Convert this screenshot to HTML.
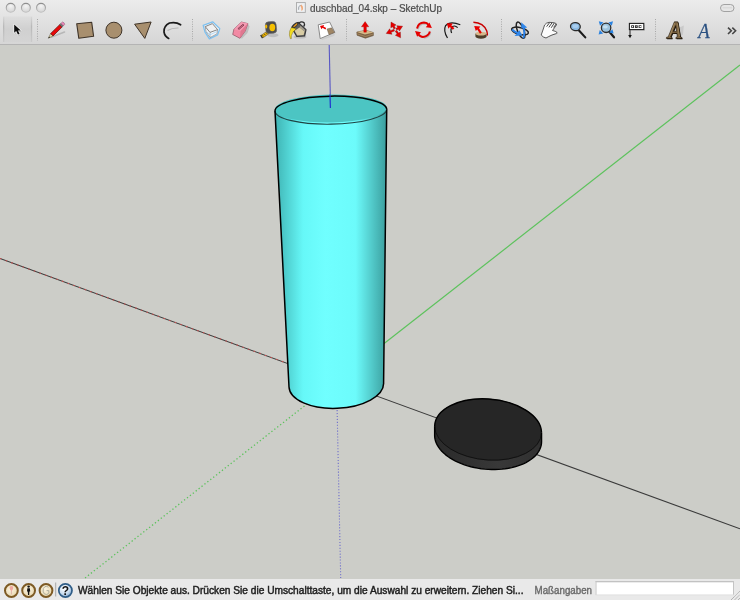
<!DOCTYPE html>
<html><head><meta charset="utf-8">
<style>
html,body{margin:0;padding:0;width:740px;height:600px;overflow:hidden;background:#cccdc8;}
svg{display:block;position:absolute;left:0;top:0;will-change:transform;}
text{font-family:"Liberation Sans",sans-serif;}
</style></head>
<body>
<svg width="740" height="600" viewBox="0 0 740 600">
<defs>
  <linearGradient id="tb" x1="0" y1="0" x2="0" y2="1">
    <stop offset="0" stop-color="#ececec"/>
    <stop offset="1" stop-color="#d6d6d6"/>
  </linearGradient>
  <linearGradient id="side" x1="275" y1="0" x2="387" y2="0" gradientUnits="userSpaceOnUse">
    <stop offset="0" stop-color="#3fb3b3"/>
    <stop offset="0.25" stop-color="#66f8f8"/>
    <stop offset="0.45" stop-color="#70ffff"/>
    <stop offset="0.72" stop-color="#6cfbfb"/>
    <stop offset="1" stop-color="#3a9c9c"/>
  </linearGradient>
</defs>
<!-- canvas -->
<rect x="0" y="45" width="740" height="534" fill="#cccdc8"/>
<!-- axes -->
<line x1="0" y1="258.5" x2="740" y2="528.8" stroke="#3a3a3a" stroke-width="1.1"/>
<line x1="0" y1="258.5" x2="336.5" y2="381.3" stroke="#c85050" stroke-width="1.1" stroke-dasharray="1.5 4.5"/>
<line x1="336.5" y1="380.8" x2="740" y2="65" stroke="#5cc25c" stroke-width="1.2"/>
<line x1="336.5" y1="380.8" x2="85" y2="578" stroke="#5cc25c" stroke-width="1.3" stroke-dasharray="1.3 2.4"/>
<line x1="329.2" y1="45" x2="336.6" y2="380.8" stroke="#5858c4" stroke-width="1.1"/>
<line x1="336.5" y1="380.8" x2="340.7" y2="578" stroke="#6464cc" stroke-width="1.1" stroke-dasharray="1.1 1.83" opacity="0.9"/>

<!-- cylinder -->
<path d="M275,111 L289,387 A47.3,23.3 -2.4 0 0 383.6,383 L386.7,109.3 Z" fill="url(#side)"/>
<ellipse cx="330.85" cy="108.5" rx="55.85" ry="14" fill="#4cc5c3" transform="rotate(-0.9 330.85 108.5)"/>
<path d="M275,111 A55.85,14 -0.9 0 1 386.7,109.3" fill="none" stroke="#000" stroke-width="1.5"/>
<path d="M275,111 A55.85,14 -0.9 0 0 386.7,109.3" fill="none" stroke="#1e4444" stroke-width="1.1"/>
<path d="M275,111 L289,387 A47.3,23.3 -2.4 0 0 383.6,383 L386.7,109.3" fill="none" stroke="#000" stroke-width="1.5" stroke-linejoin="round"/>
<line x1="330" y1="94.5" x2="330.4" y2="108" stroke="#2030d0" stroke-width="1.2"/>
<!-- disc -->
<defs><linearGradient id="dside" x1="434" y1="0" x2="542" y2="0" gradientUnits="userSpaceOnUse">
<stop offset="0" stop-color="#2a2a2a"/><stop offset="0.6" stop-color="#383838"/><stop offset="1" stop-color="#303030"/></linearGradient></defs>
<path d="M541.56,432.63 L541.56,441.63 L541.45,443.64 L541.11,445.63 L540.54,447.59 L539.74,449.51 L538.73,451.38 L537.49,453.20 L536.05,454.96 L534.40,456.65 L532.55,458.25 L530.52,459.78 L528.30,461.21 L525.90,462.54 L523.35,463.78 L520.65,464.90 L517.80,465.91 L514.83,466.80 L511.75,467.58 L508.56,468.22 L505.29,468.74 L501.94,469.14 L498.53,469.40 L495.08,469.52 L491.60,469.52 L488.10,469.38 L484.60,469.11 L481.12,468.71 L477.67,468.18 L474.26,467.52 L470.91,466.74 L467.64,465.83 L464.45,464.81 L461.37,463.68 L458.40,462.44 L455.55,461.10 L452.85,459.66 L450.30,458.12 L447.90,456.51 L445.68,454.82 L443.65,453.06 L441.80,451.23 L440.15,449.35 L438.71,447.43 L437.47,445.47 L436.46,443.47 L435.66,441.46 L435.09,439.43 L434.75,437.40 L434.64,435.37 L434.64,426.37 Z" fill="url(#dside)"/>
<ellipse cx="488.1" cy="429.5" rx="53.6" ry="30.8" fill="#262626" transform="rotate(5 488.1 429.5)"/>
<path d="M434.64,426.37 A53.6,30.8 5 0 1 541.56,432.63" fill="none" stroke="#000" stroke-width="1.4"/>
<path d="M434.64,426.37 A53.6,30.8 5 0 0 541.56,432.63" fill="none" stroke="#111" stroke-width="1"/>
<path d="M541.56,432.63 L541.56,441.63 L541.45,443.64 L541.11,445.63 L540.54,447.59 L539.74,449.51 L538.73,451.38 L537.49,453.20 L536.05,454.96 L534.40,456.65 L532.55,458.25 L530.52,459.78 L528.30,461.21 L525.90,462.54 L523.35,463.78 L520.65,464.90 L517.80,465.91 L514.83,466.80 L511.75,467.58 L508.56,468.22 L505.29,468.74 L501.94,469.14 L498.53,469.40 L495.08,469.52 L491.60,469.52 L488.10,469.38 L484.60,469.11 L481.12,468.71 L477.67,468.18 L474.26,467.52 L470.91,466.74 L467.64,465.83 L464.45,464.81 L461.37,463.68 L458.40,462.44 L455.55,461.10 L452.85,459.66 L450.30,458.12 L447.90,456.51 L445.68,454.82 L443.65,453.06 L441.80,451.23 L440.15,449.35 L438.71,447.43 L437.47,445.47 L436.46,443.47 L435.66,441.46 L435.09,439.43 L434.75,437.40 L434.64,435.37 L434.64,426.37" fill="none" stroke="#000" stroke-width="1.4" stroke-linejoin="round"/>
<!-- top bar -->
<rect x="0" y="0" width="740" height="44" fill="url(#tb)"/>
<rect x="0" y="44" width="740" height="1" fill="#b4b4b4"/>
<rect x="296.5" y="2.6" width="8.8" height="9.8" fill="#eef0f2" stroke="#a8a8a8" stroke-width="0.9"/>
<path d="M301.3,4.5 Q303.5,6 303,9 Q302.6,11 301.3,10.8 Q302,8 300.2,5.6 Z" fill="#f0a878"/>
<path d="M300.5,5 Q298,6.5 298.6,9.8" fill="none" stroke="#8a9098" stroke-width="0.8"/>
<text x="310" y="12" font-size="10.8" fill="#4a4a4a" stroke="#4a4a4a" stroke-width="0.2" textLength="132" lengthAdjust="spacingAndGlyphs">duschbad_04.skp – SketchUp</text>


<!-- traffic lights -->
<defs>
  <radialGradient id="tl" cx="0.5" cy="0.3" r="0.7">
    <stop offset="0" stop-color="#f4f4f4"/><stop offset="1" stop-color="#d4d4d4"/>
  </radialGradient>
  <linearGradient id="selbtn" x1="0" y1="0" x2="0" y2="1">
    <stop offset="0" stop-color="#d8d8d8"/><stop offset="1" stop-color="#cbcbcb"/>
  </linearGradient>
</defs>
<defs><linearGradient id="tls" x1="0" y1="0" x2="0" y2="1"><stop offset="0" stop-color="#8e8e8e"/><stop offset="1" stop-color="#c0c0c0"/></linearGradient></defs>
<circle cx="10.7" cy="7.8" r="4.45" fill="url(#tl)" stroke="url(#tls)" stroke-width="1.1"/>
<circle cx="25.9" cy="7.8" r="4.45" fill="url(#tl)" stroke="url(#tls)" stroke-width="1.1"/>
<circle cx="41" cy="7.8" r="4.45" fill="url(#tl)" stroke="url(#tls)" stroke-width="1.1"/>
<rect x="720.5" y="4.5" width="13.5" height="7" rx="3.5" fill="#e6e6e6" stroke="#9a9a9a" stroke-width="0.9"/>
<line x1="722.5" y1="7.8" x2="732" y2="7.8" stroke="#d0d0d0" stroke-width="0.8"/>
<!-- selected tool button -->
<defs>
<linearGradient id="selbg" x1="0" y1="0" x2="0" y2="1"><stop offset="0" stop-color="#dedede"/><stop offset="0.5" stop-color="#d0d0d0"/><stop offset="1" stop-color="#d4d4d4"/></linearGradient>
<linearGradient id="selside" x1="0" y1="0" x2="0" y2="1"><stop offset="0" stop-color="#bdbdbd" stop-opacity="0.2"/><stop offset="0.4" stop-color="#b8b8b8"/><stop offset="1" stop-color="#c0c0c0" stop-opacity="0.5"/></linearGradient>
</defs>
<rect x="3.3" y="16.5" width="28.6" height="25.5" fill="url(#selbg)"/>
<rect x="3" y="16.5" width="1.3" height="25.5" fill="url(#selside)"/>
<rect x="30.9" y="16.5" width="1.3" height="25.5" fill="url(#selside)"/>
<!-- arrow cursor -->
<path d="M15,26 L15,34 L17,32.2 L18.7,35.8 L20.3,35.1 L18.7,31.7 L21.4,31.7 Z" fill="#8a8a8a" opacity="0.4"/>
<path d="M14.2,24.4 L14.2,32.8 L16.2,31 L17.9,34.6 L19.6,33.9 L18,30.4 L20.8,30.4 Z" fill="#f6f6f6" stroke="#f6f6f6" stroke-width="1.3" stroke-linejoin="round"/>
<path d="M14.2,24.4 L14.2,32.8 L16.2,31 L17.9,34.6 L19.6,33.9 L18,30.4 L20.8,30.4 Z" fill="#0e0e0e"/>
<!-- separators -->
<g stroke="#a8a8a8" stroke-width="1" stroke-dasharray="1 1.4">
<line x1="37.5" y1="19" x2="37.5" y2="41"/>
<line x1="192.5" y1="19" x2="192.5" y2="41"/>
<line x1="346.5" y1="19" x2="346.5" y2="41"/>
<line x1="501.5" y1="19" x2="501.5" y2="41"/>
<line x1="655.5" y1="19" x2="655.5" y2="41"/>
</g>
<!-- pencil -->
<path d="M51,37.2 L64.5,32" stroke="#9a9a9a" stroke-width="1.6" opacity="0.55" stroke-linecap="round"/>
<path d="M48.30,38.20 L53.06,35.91 L50.68,33.48 Z" fill="#e8dca0" stroke="#3a3020" stroke-width="0.4"/>
<path d="M48.30,38.20 L50.01,37.38 L49.16,36.50 Z" fill="#111"/>
<path d="M53.06,35.91 L62.05,27.09 L59.67,24.66 L50.68,33.48 Z" fill="#e80808" stroke="#4a0000" stroke-width="0.6"/>
<path d="M62.05,27.09 L63.34,25.83 L60.96,23.40 L59.67,24.66 Z" fill="#7a7a7a" stroke="#333" stroke-width="0.4"/>
<path d="M63.34,25.83 L64.82,24.37 Q64.41,22.39 62.44,21.95 L60.96,23.40 Z" fill="#e888b8" stroke="#7a3a5a" stroke-width="0.4"/>
<!-- rectangle -->
<path d="M76.7,23.7 L91.7,22.2 L93.6,36.2 L78.8,38.3 Z" fill="#a88f6e" stroke="#3e3328" stroke-width="1.1" stroke-linejoin="round"/>
<!-- circle -->
<circle cx="113.9" cy="30.2" r="8" fill="#a88f6e" stroke="#3e3328" stroke-width="1"/>
<!-- triangle -->
<path d="M134.6,24.2 L151.1,22 L144.8,38.4 Z" fill="#a88f6e" stroke="#3e3328" stroke-width="1" stroke-linejoin="round"/>
<!-- arc -->
<path d="M167.5,30.5 Q172,27.8 178.5,28" stroke="#b4b4b4" stroke-width="1.2" fill="none"/>
<path d="M180.6,24.8 Q176,21.5 169.5,23 Q163.5,26 164,32 Q164.8,36.5 168.7,38.4" stroke="#1a1a1a" stroke-width="1.7" fill="none" stroke-linecap="round"/>
<!-- select box (outliner) -->
<path d="M203.2,25.4 L212.6,21.8 L219.8,28.6 L217.6,34.8 L209.4,38.8 L205,32.2 Z" fill="#f4f6f8" stroke="#7cc0f0" stroke-width="1.3" stroke-linejoin="round"/>
<path d="M205.2,26.6 L212.4,23.6 L217.6,29.6 L210,32.4 Z" fill="#f0f0f0" stroke="#6a6a6a" stroke-width="0.8" stroke-linejoin="round"/>
<path d="M205.2,26.6 L206,31.6 L210,37.6 L217,33.8 L217.6,29.6" fill="none" stroke="#8a8a8a" stroke-width="0.7"/>
<path d="M210,32.4 L210,37.6" stroke="#7a9ab0" stroke-width="0.6"/>
<path d="M206.5,31.6 L210,34.8 L216.8,31.6" fill="none" stroke="#88c4ee" stroke-width="0.6"/>
<!-- eraser -->
<path d="M240,38.3 L245.2,31.1 L247.9,23.6 L249.6,26.5 L247.5,33 L242,38.6 Z" fill="#a8a8a8" opacity="0.55"/>
<path d="M233.9,29.2 L241.4,22 L247.9,23.6 L245.2,31.1 L239.9,38.3 L232.7,34.5 Z" fill="#f28aa4" stroke="#7a4050" stroke-width="0.6" stroke-linejoin="round"/>
<path d="M233.9,29.2 L241.4,22 L247.9,23.6 L240.6,30.9 Z" fill="#f49ab2"/>
<path d="M240.6,30.9 L247.9,23.6 L245.2,31.1 L239.9,38.3 Z" fill="#e07890"/>
<path d="M237.9,28.6 L242.9,24.3 L244,25.1 L239.1,29.4 Z" fill="#d8708a" stroke="#6a3040" stroke-width="0.7"/>
<!-- tape measure -->
<ellipse cx="273" cy="35.2" rx="5.5" ry="2" fill="#b0b0b0" opacity="0.7"/>
<path d="M260.8,35.6 L267,31.2 L269,33.6 L262.8,38 Z" fill="#f2b800" stroke="#3a3a3a" stroke-width="0.5"/>
<path d="M262.6,35.2 l0.9,1.2 M264.4,34 l0.9,1.2 M266.2,32.7 l0.9,1.2" stroke="#1a1a1a" stroke-width="0.7"/>
<path d="M260.2,35.4 L261.2,34.8 L263,37.6 L262,38.5 Z" fill="#333"/>
<rect x="265.6" y="21.6" width="10.8" height="11.8" rx="3.4" fill="#4c4c4c" stroke="#6a6a6a" stroke-width="0.6" transform="rotate(-6 271 27.5)"/>
<ellipse cx="272.3" cy="27.5" rx="2.9" ry="3.7" fill="#f6c000"/>
<ellipse cx="266.2" cy="26.4" rx="1.1" ry="2" fill="#f2b800"/>
<!-- paint bucket -->
<ellipse cx="300" cy="37" rx="6.5" ry="1.6" fill="#a8a8a8" opacity="0.6"/>
<path d="M292,28.3 L298.2,22.4 L306,29.6 L304.6,36 L296.8,36.4 Z" fill="#5e5e5e" stroke="#3a3a3a" stroke-width="1.2" stroke-linejoin="round"/>
<path d="M294.6,30.8 L299.6,27.4 L304.6,31.4 L303.6,35.1 L297.2,35.5 Z" fill="#d8cca4"/>
<path d="M299.6,27.4 L304.6,31.4 L305.2,29.9 L300.5,25.8 Z" fill="#a8a090"/>
<ellipse cx="294.9" cy="25.4" rx="4.6" ry="1.8" transform="rotate(-42 294.9 25.4)" fill="#2e2e2e"/>
<ellipse cx="295.3" cy="25.3" rx="2.8" ry="0.8" transform="rotate(-42 295.3 25.3)" fill="#d89020"/>
<path d="M298.8,23.2 Q301.5,20.8 304.1,22.8 Q305.2,24.4 303.6,26.6" fill="none" stroke="#2a2a2a" stroke-width="1.3"/>
<path d="M291.3,27.6 Q289,31 289.4,35 L290.3,38.6 L291.4,38.6 L291.3,35.8 Q292.4,31.6 296.2,28.8 Z" fill="#f2dc22" stroke="#6a5a10" stroke-width="0.4"/>
<!-- component -->
<path d="M321,39 L335.5,33 L334,36 L322,40 Z" fill="#c0c0c0" opacity="0.5"/>
<path d="M318.2,24.8 L329.6,22 L334.8,32.4 L320.2,38.6 Z" fill="#ffffff" stroke="#8a8a8a" stroke-width="1" stroke-linejoin="round"/>
<path d="M327,29 L331.6,27.8 L334.5,32.4 L329,34.6 Z" fill="#a08664" stroke="#5a4a38" stroke-width="0.4"/>
<path d="M320,26 L324.2,25.1 L323.4,26.4 L326.2,28 L325.4,29.4 L322.6,27.8 L321.5,29.2 Z" fill="#e80000"/>
<!-- push pull -->
<path d="M356.8,32 L366,30.3 L373.4,32.6 L373.4,35.6 L365.4,38.2 L357,35.2 Z" fill="#7e6446" stroke="#5a4630" stroke-width="0.5" stroke-linejoin="round"/>
<path d="M357,33.8 L365.4,36.5 L373.4,34" fill="none" stroke="#b89c70" stroke-width="0.6"/>
<path d="M356.8,32 L366,30.3 L373.4,32.6 L365,34.6 Z" fill="#d6ba8a"/>
<path d="M365.1,21.6 L368.8,26.8 L366.4,26.8 L366.4,32.2 L363.8,32.2 L363.8,26.8 L361.4,26.8 Z" fill="#e80000" stroke="#a00000" stroke-width="0.3"/>
<!-- move -->
<g fill="#e80000" stroke="#7a0000" stroke-width="0.35" stroke-linejoin="round">
<path d="M391.00,22.00 L396.06,24.90 L394.22,25.93 L395.50,28.21 L393.93,29.09 L392.65,26.80 L390.82,27.83 Z"/>
<path d="M402.60,26.20 L399.39,31.07 L398.48,29.17 L396.77,29.99 L395.99,28.37 L397.70,27.55 L396.79,25.66 Z"/>
<path d="M386.20,33.40 L389.70,28.74 L390.49,30.68 L393.85,29.32 L394.53,30.99 L391.17,32.35 L391.96,34.30 Z"/>
<path d="M400.60,37.80 L395.35,35.26 L397.11,34.11 L395.20,31.20 L396.71,30.21 L398.62,33.12 L400.37,31.97 Z"/>
</g>
<!-- rotate -->
<g fill="none" stroke="#a0a0a0" stroke-width="1.6" opacity="0.55">
<path d="M418,29.3 Q419.5,24 424.8,23.8 Q428,24 429.6,26"/>
<path d="M430.6,32.6 Q429.4,37.6 423.8,37.9"/>
</g>
<g fill="none" stroke="#e00000" stroke-width="2">
<path d="M417,28.4 Q418.4,22.8 424,22.6 Q427.2,22.7 428.6,25"/>
<path d="M429.9,31.6 Q428.6,36.6 423,36.9 Q419.9,36.9 418.6,34.6"/>
</g>
<g fill="#e60000">
<path d="M429.4,22.4 L431.9,28.1 L425.8,27.3 Z"/>
<path d="M415,31.1 L421,32.2 L417.2,36.7 Z"/>
</g>
<!-- follow me -->
<g fill="none" stroke="#1a1a1a" stroke-width="1.2">
<path d="M447.5,38 Q443,31 445.6,25.6 Q450,20.5 460.3,24.7"/>
<path d="M451.6,33 Q450,29 452.4,26.6 Q455,25 457.7,27.7"/>
</g>
<path d="M446.8,23.3 L452.8,23.6 L451.4,25.5 L454.4,28.3 L452.8,29.7 L449.8,27 L448.4,28.8 Z" fill="#e80000"/>
<!-- scale / offset -->
<path d="M473.4,22.2 Q483.5,22.5 486.8,31 Q487.6,34 487.2,35.5" fill="none" stroke="#c80000" stroke-width="1.4"/>
<path d="M475.4,33.6 L475.4,36.6 A5.6,2.1 0 0 0 486.6,36.6 L486.6,33.6 Z" fill="#4e3e2a"/>
<ellipse cx="481" cy="33.6" rx="5.6" ry="1.9" fill="#d6b68a"/>
<path d="M474.2,26 L480.4,26.4 L479,28.2 L481.8,32.6 L480,33.8 L477.2,29.4 L475.8,31 Z" fill="#e80000"/>
<!-- orbit -->
<ellipse cx="520" cy="31" rx="8.6" ry="3.4" transform="rotate(14 520 31)" fill="none" stroke="#222" stroke-width="1.5"/>
<ellipse cx="520.6" cy="30.2" rx="3.2" ry="8.6" transform="rotate(-22 520.6 30.2)" fill="none" stroke="#222" stroke-width="1.5"/>
<path d="M512,29.5 Q514.5,32 518.5,33.2" fill="none" stroke="#2a80e8" stroke-width="1.8"/>
<path d="M514.6,36 L519.4,30.2 L522.4,35.4 Z" fill="#2f86ea"/>
<path d="M523.4,38.2 Q525.6,31 522.6,25.5" fill="none" stroke="#2a80e8" stroke-width="1.9"/>
<path d="M521.2,22.2 L527.2,27.4 L521.4,28.6 Z" fill="#2f86ea"/>
<!-- pan hand -->
<path d="M544,37.5 Q548.5,37 551,35 Q556,34 557.6,33.2" fill="none" stroke="#bdbdbd" stroke-width="1.2"/>
<path d="M541.2,35 Q543,30 544.6,25 Q546,22.8 549,22.3 L554.5,22.8 Q557,23.5 556.4,25 L552.5,30.5 Q555.5,31 557.2,32.6 Q556,34 552,35 Q548.5,36.5 546,38 Q543,37.4 541.2,35 Z" fill="#fcfcfc" stroke="#4a4a4a" stroke-width="0.9" stroke-linejoin="round"/>
<path d="M546.6,26.6 L549.6,22.7 M548.9,27.3 L552,22.8 M551.2,27.8 L554.3,23 M553.6,27.4 L556.2,24" stroke="#333" stroke-width="0.9"/>
<!-- zoom -->
<line x1="579" y1="30.5" x2="585.3" y2="37.4" stroke="#1a1a1a" stroke-width="2.1" stroke-linecap="round"/>
<ellipse cx="575.4" cy="26.6" rx="4.9" ry="4" fill="#8cbae2" stroke="#2a2a2a" stroke-width="1.3" transform="rotate(8 575.4 26.6)"/>
<ellipse cx="575.4" cy="26.2" rx="2.8" ry="1.9" fill="#a8cef0"/>
<!-- zoom extents -->
<line x1="608.6" y1="30.8" x2="614" y2="37.3" stroke="#1a1a1a" stroke-width="2.2" stroke-linecap="round"/>
<circle cx="606.1" cy="27.8" r="4.7" fill="#9cc2dc" stroke="#2e2e2e" stroke-width="1.3"/>
<ellipse cx="605.3" cy="26.8" rx="2.5" ry="1.6" fill="#c6e0f0"/>
<g fill="#2a82e0">
<path d="M598.8,21.3 L603.5,22.4 L600,25.8 Z"/>
<path d="M613,21.3 L611.8,25.8 L608.4,22.4 Z"/>
<path d="M598.6,34.5 L599.8,30 L603.2,33.4 Z"/>
<path d="M613.6,33.5 L609.2,32.6 L612.4,29.2 Z"/>
</g>
<!-- text tool -->
<rect x="631" y="25" width="14" height="6" fill="#b8b8b8" opacity="0.5"/>
<rect x="629.4" y="23.4" width="14.4" height="6.2" fill="#fff" stroke="#1e1e1e" stroke-width="1.1"/>
<g fill="#222"><rect x="631.2" y="25.3" width="2.8" height="2.6"/><rect x="634.9" y="25.3" width="2.8" height="2.6"/><rect x="638.6" y="25.3" width="2.8" height="2.6"/></g>
<g fill="#fff"><rect x="632.1" y="26" width="1" height="1.2"/><rect x="635.8" y="26" width="1" height="0.6"/><rect x="639.5" y="26" width="1.9" height="1.2"/></g>
<line x1="630" y1="29.8" x2="630" y2="36" stroke="#222" stroke-width="1"/>
<path d="M628.2,35 L631.8,35 L630,38.3 Z" fill="#111"/>
<!-- 3d text -->
<path d="M679.5,27.5 L683.8,25.6 L683,34.5 L680.6,36.5 Z" fill="#bdbdbd" opacity="0.6"/>
<path d="M674.4,21.8 L677.8,21.8 L680.3,36.9 L681.8,37.3 L681.6,38.5 L675.8,38.5 L676,37.3 L677.4,36.9 L676.9,33.3 L672.3,33.3 L670.7,36.9 L671.9,37.3 L671.7,38.5 L666.3,38.5 L666.5,37.3 L668.2,36.9 Z M673.2,31.3 L676.6,31.3 L675.7,25.6 Z" transform="translate(0.8,0.7)" fill="#1a1208" fill-rule="evenodd"/>
<path d="M674.4,21.8 L677.8,21.8 L680.3,36.9 L681.8,37.3 L681.6,38.5 L675.8,38.5 L676,37.3 L677.4,36.9 L676.9,33.3 L672.3,33.3 L670.7,36.9 L671.9,37.3 L671.7,38.5 L666.3,38.5 L666.5,37.3 L668.2,36.9 Z M673.2,31.3 L676.6,31.3 L675.7,25.6 Z" fill="#7e6644" stroke="#1e1408" stroke-width="0.6" stroke-linejoin="round" fill-rule="evenodd"/>
<path d="M674.6,23.2 L669.6,36.4 M677.5,23.4 L679.5,36.2" stroke="#c4aa78" stroke-width="0.7" opacity="0.75"/>
<!-- blue text -->
<text x="698.2" y="38.3" font-size="21.5" font-style="italic" fill="#2a5080" stroke="#2a5080" stroke-width="0.3" textLength="11.4" lengthAdjust="spacingAndGlyphs" style="font-family:'Liberation Serif',serif">A</text>
<!-- chevron -->
<path d="M728,27.6 L731.3,30.8 L728,34 M732.3,27.6 L735.6,30.8 L732.3,34" fill="none" stroke="#444" stroke-width="1.6"/>

<!-- status bar -->
<rect x="0" y="579" width="740" height="21" fill="#e9e9e9"/>
<defs>
  <radialGradient id="geo" cx="0.45" cy="0.4" r="0.6">
    <stop offset="0" stop-color="#fbf3e0"/><stop offset="1" stop-color="#e8d8b0"/>
  </radialGradient>
  <radialGradient id="help" cx="0.4" cy="0.35" r="0.7">
    <stop offset="0" stop-color="#ffffff"/><stop offset="0.6" stop-color="#c8dcf0"/><stop offset="1" stop-color="#7aa0c8"/>
  </radialGradient>
</defs>
<circle cx="11.4" cy="590.5" r="6.4" fill="url(#geo)" stroke="#7d5a24" stroke-width="2"/>
<path d="M11.4,594.5 L11.4,591" stroke="#d8a8a0" stroke-width="0.8"/><path d="M9.7,588.4 A1.75,2 0 1 1 13.1,588.4 Q12.8,590 11.4,591.2 Q10,590 9.7,588.4 Z" fill="#f0a8a0"/>
<circle cx="28.6" cy="590.5" r="6.4" fill="url(#geo)" stroke="#7d5a24" stroke-width="2"/>
<circle cx="28.6" cy="586.6" r="1.2" fill="#111"/>
<path d="M27.3,588.3 L29.9,588.3 L30.2,591.5 L29.4,591.5 L29.2,595 L28,595 L27.8,591.5 L27,591.5 Z" fill="#111"/>
<circle cx="46" cy="590.5" r="6.4" fill="url(#geo)" stroke="#7d5a24" stroke-width="2"/>
<path d="M48.5,587.3 Q46.8,585.8 45,586.6 Q42.7,588 43.1,591.2 Q43.6,594.6 46.4,594.5 Q48.3,594.3 48.8,592.8 L48.8,590.6 L46.6,590.6" fill="none" stroke="#a8a898" stroke-width="0.9"/>
<line x1="55.6" y1="582.5" x2="55.6" y2="596.5" stroke="#b4b4b4" stroke-width="1.3"/>
<circle cx="65.4" cy="590.5" r="6.6" fill="url(#help)" stroke="#2e5c86" stroke-width="1.7"/>
<text x="65.5" y="594.9" font-size="12" font-weight="bold" fill="#111" text-anchor="middle">?</text>
<!-- resize grip -->
<g stroke="#8a8a8a" stroke-width="0.8" stroke-dasharray="1 0.6">
<line x1="731" y1="600" x2="740" y2="591"/>
<line x1="734.5" y1="600" x2="740" y2="594.5"/>
<line x1="738" y1="600" x2="740" y2="598"/>
</g>

<text x="78" y="593.9" font-size="10.25" fill="#1e1e1e" stroke="#1e1e1e" stroke-width="0.45" textLength="445.5" lengthAdjust="spacingAndGlyphs">Wählen Sie Objekte aus. Drücken Sie die Umschalttaste, um die Auswahl zu erweitern. Ziehen Si...</text>
<text x="534.6" y="594" font-size="10.6" fill="#6a6a6a" stroke="#6a6a6a" stroke-width="0.4" textLength="57.4" lengthAdjust="spacingAndGlyphs">Maßangaben</text>
<rect x="595.5" y="581" width="138.5" height="14" fill="#fff"/>
<rect x="595.5" y="581" width="138.5" height="1" fill="#c2c2c2"/>
<rect x="595.5" y="582" width="138.5" height="1" fill="#ececec"/>
<rect x="595.5" y="581" width="1" height="14" fill="#c4c4c4"/>
<rect x="733" y="581" width="1" height="14" fill="#c4c4c4"/>
<rect x="595.5" y="594.5" width="138.5" height="0.8" fill="#dcdcdc"/>
</svg>
</body></html>
